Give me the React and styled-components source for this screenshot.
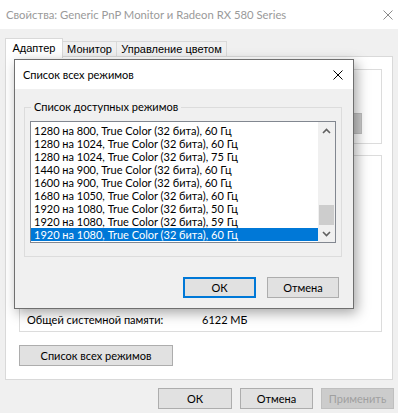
import React from "react";
import styled, { createGlobalStyle } from "styled-components";

const Global = createGlobalStyle`
  html, body { margin: 0; padding: 0; background: #f0f0f0; }
  * { box-sizing: border-box; }
`;

const UI = `Lato, "Noto Sans", sans-serif`;

const Window = styled.div`
  position: relative;
  width: 398px;
  height: 413px;
  background: #f0f0f0;
  display: flex;
  flex-direction: column;
  font-family: ${UI};
  font-size: 11px;
  color: #000;
  overflow: hidden;
`;

const TitleBar = styled.div`
  height: 29px;
  flex: none;
  background: #fff;
  display: flex;
  align-items: center;
  justify-content: space-between;
  padding: 0 ${(p) => p.$right}px 0 ${(p) => p.$left}px;
  color: ${(p) => (p.$inactive ? "#9a9a9a" : "#000")};
  font-size: ${(p) => (p.$inactive ? 11.3 : 11)}px;
  white-space: nowrap;
`;

const TabStrip = styled.div`
  margin-top: 8px;
  height: 20px;
  padding-left: 5px;
  display: flex;
  align-items: flex-end;
  position: relative;
  z-index: 2;
  font-family: "Liberation Sans", Arial, sans-serif;
  font-size: 11px;
`;

const Tab = styled.div`
  width: ${(p) => p.$w}px;
  height: ${(p) => (p.$active ? 20 : 16)}px;
  margin-left: ${(p) => (p.$first ? 0 : -1)}px;
  display: flex;
  align-items: center;
  justify-content: center;
  padding-bottom: ${(p) => (p.$active ? 2 : 0)}px;
  background: ${(p) => (p.$active ? "#fff" : "#f0f0f0")};
  border: 1px solid #d9d9d9;
  border-bottom: ${(p) => (p.$active ? "none" : "1px solid #d9d9d9")};
  margin-bottom: ${(p) => (p.$active ? -1 : 0)}px;
  position: relative;
  z-index: ${(p) => (p.$active ? 2 : 1)};
  white-space: nowrap;
`;

const Panel = styled.div`
  margin: -1px 5px 0;
  height: 324px;
  background: #fff;
  border: 1px solid #d9d9d9;
  display: flex;
  flex-direction: column;
  padding: 12px 10px 0 13px;
  position: relative;
  z-index: 1;
`;

const Group = styled.div`
  height: ${(p) => p.$h}px;
  margin-top: ${(p) => p.$mt || 0}px;
  border: 1px solid #dcdcdc;
  display: flex;
  flex-direction: column;
  justify-content: ${(p) => p.$justify || "flex-start"};
  align-items: ${(p) => p.$align || "stretch"};
  padding: ${(p) => p.$pad || "0"};
  flex: none;
`;

const InfoRow = styled.div`
  display: grid;
  grid-template-columns: 175px 1fr;
  padding-left: 7px;
  line-height: 16px;
`;

const Button = styled.div`
  width: ${(p) => p.$w}px;
  height: ${(p) => p.$h || 21}px;
  flex: none;
  display: flex;
  align-items: center;
  justify-content: center;
  background: ${(p) => (p.$disabled ? "#cccccc" : "#e1e1e1")};
  border: ${(p) => (p.$default ? "2px solid #0078d7" : p.$disabled ? "1px solid #bfbfbf" : "1px solid #adadad")};
  color: ${(p) => (p.$disabled ? "#a0a0a0" : "#000")};
  white-space: nowrap;
  margin-top: ${(p) => p.$mt || 0}px;
`;

const ButtonRow = styled.div`
  display: flex;
  justify-content: flex-end;
  gap: ${(p) => p.$gap}px;
  margin-top: ${(p) => p.$mt}px;
  padding-right: ${(p) => p.$pr}px;
`;

/* Dialog */
const Dialog = styled.div`
  position: absolute;
  left: 14px;
  top: 59px;
  width: 340px;
  height: 250px;
  border: 1px solid #6f6f6f;
  background: #f0f0f0;
  box-shadow: 3px 4px 12px rgba(0, 0, 0, 0.35);
  display: flex;
  flex-direction: column;
  z-index: 10;
`;

const DialogBody = styled.div`
  flex: 1;
  padding: 18px 11px 0 9px;
  display: flex;
  flex-direction: column;
`;

const FieldSet = styled.div`
  position: relative;
  height: 150px;
  border: 1px solid #dcdcdc;
  padding: 13px 5px 0 5px;
`;

const Legend = styled.div`
  position: absolute;
  left: 6px;
  top: -9px;
  padding: 0 3px;
  background: #f0f0f0;
  line-height: 16px;
`;

const ListBox = styled.div`
  height: 122px;
  border: 1px solid #828790;
  background: #fff;
  display: flex;
`;

const Items = styled.div`
  flex: 1;
  padding-top: 2px;
  display: flex;
  flex-direction: column;
`;

const Item = styled.div`
  height: 13px;
  line-height: 13px;
  padding-left: 3px;
  white-space: nowrap;
  background: ${(p) => (p.$selected ? "#0078d7" : "transparent")};
  color: ${(p) => (p.$selected ? "#fff" : "#000")};
`;

const ScrollBar = styled.div`
  width: 17px;
  background: #f0f0f0;
  display: flex;
  flex-direction: column;
`;

const Arrow = styled.div`
  height: 17px;
  display: flex;
  align-items: center;
  justify-content: center;
`;

const Track = styled.div`
  flex: 1;
  display: flex;
  flex-direction: column;
  justify-content: flex-end;
  padding: 0 1px;
`;

const Thumb = styled.div`
  height: 20px;
  background: #cdcdcd;
`;

const CloseIcon = ({ color, size = 10, w = 1 }) => (
  <svg width={size} height={size} viewBox="0 0 10 10">
    <path d="M0.5 0.5 L9.5 9.5 M9.5 0.5 L0.5 9.5" stroke={color} strokeWidth={w} fill="none" />
  </svg>
);

const Chevron = ({ up }) => (
  <svg width="9" height="6" viewBox="0 0 9 6">
    <path
      d={up ? "M1 5 L4.5 1.5 L8 5" : "M1 1 L4.5 4.5 L8 1"}
      stroke="#606060"
      strokeWidth="1.6"
      fill="none"
    />
  </svg>
);

const modes = [
  "1280 на 800, True Color (32 бита), 60 Гц",
  "1280 на 1024, True Color (32 бита), 60 Гц",
  "1280 на 1024, True Color (32 бита), 75 Гц",
  "1440 на 900, True Color (32 бита), 60 Гц",
  "1600 на 900, True Color (32 бита), 60 Гц",
  "1680 на 1050, True Color (32 бита), 60 Гц",
  "1920 на 1080, True Color (32 бита), 50 Гц",
  "1920 на 1080, True Color (32 бита), 59 Гц",
  "1920 на 1080, True Color (32 бита), 60 Гц",
];

export default function App() {
  return (
    <>
      <Global />
      <Window>
        <TitleBar $inactive $left={6} $right={5}>
          <span>Свойства: Generic PnP Monitor и Radeon RX 580 Series</span>
          <CloseIcon color="#8a8a8a" />
        </TitleBar>
        <TabStrip>
          <Tab $active $first $w={58}>Адаптер</Tab>
          <Tab $w={55}>Монитор</Tab>
          <Tab $w={111}>Управление цветом</Tab>
        </TabStrip>
        <Panel>
          <Group $h={75} $align="flex-end" $pad="43px 19px 0 0">
            <Button $w={60} $h={21} $disabled />
          </Group>
          <Group $h={177} $mt={11} $justify="flex-end" $pad="0 0 3px 0">
            <InfoRow>
              <span>Общей системной памяти:</span>
              <span>6122 МБ</span>
            </InfoRow>
          </Group>
          <Button $w={154} $h={21} $mt={13}>Список всех режимов</Button>
        </Panel>
        <ButtonRow $gap={8} $mt={8} $pr={4}>
          <Button $w={74}>ОК</Button>
          <Button $w={73}>Отмена</Button>
          <Button $w={73} $disabled>Применить</Button>
        </ButtonRow>

        <Dialog>
          <TitleBar $left={8} $right={10}>
            <span>Список всех режимов</span>
            <CloseIcon color="#000" />
          </TitleBar>
          <DialogBody>
            <FieldSet>
              <Legend>Список доступных режимов</Legend>
              <ListBox>
                <Items>
                  {modes.map((m, i) => (
                    <Item key={i} $selected={i === modes.length - 1}>{m}</Item>
                  ))}
                </Items>
                <ScrollBar>
                  <Arrow><Chevron up /></Arrow>
                  <Track><Thumb /></Track>
                  <Arrow><Chevron /></Arrow>
                </ScrollBar>
              </ListBox>
            </FieldSet>
            <ButtonRow $gap={11} $mt={20} $pr={3}>
              <Button $w={73} $default>ОК</Button>
              <Button $w={72}>Отмена</Button>
            </ButtonRow>
          </DialogBody>
        </Dialog>
      </Window>
    </>
  );
}
